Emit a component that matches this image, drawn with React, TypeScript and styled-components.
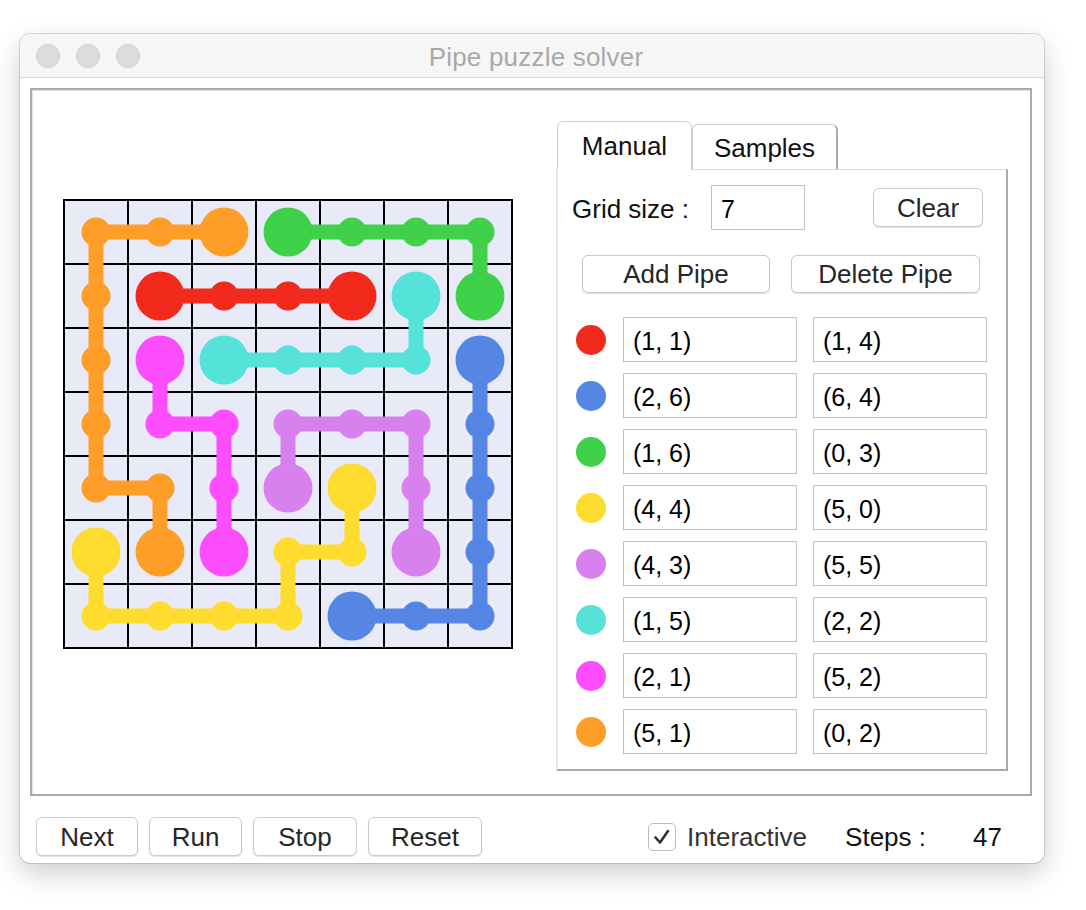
import React from "react";
import styled, { createGlobalStyle } from "styled-components";

const GlobalStyle = createGlobalStyle`
  html, body { margin: 0; padding: 0; background: #ffffff; }
  body { font-family: "Liberation Sans", Arial, sans-serif; }
  * { box-sizing: border-box; }
`;

const Page = styled.div`
  padding: 34px 0 0 20px;
  width: 1086px;
  height: 910px;
`;

const Window = styled.div`
  width: 1024px;
  height: 829px;
  border-radius: 10px;
  background: #ffffff;
  box-shadow: 0 10px 28px rgba(0, 0, 0, 0.2), 0 0 0 1px rgba(0, 0, 0, 0.13);
  display: flex;
  flex-direction: column;
  overflow: hidden;
`;

const TitleBar = styled.div`
  height: 44px;
  flex: none;
  background: #f6f6f6;
  border-bottom: 1px solid #d7d7d7;
  display: flex;
  align-items: center;
  padding-left: 16px;
`;

const Lights = styled.div`
  display: flex;
  gap: 16px;
`;

const Light = styled.span`
  width: 24px;
  height: 24px;
  border-radius: 50%;
  background: #dddddd;
  border: 1px solid #cfcfcf;
`;

const Title = styled.div`
  flex: 1;
  text-align: center;
  margin-left: -112px;
  padding-top: 3px;
  font-size: 26px;
  color: #a9a9a9;
  letter-spacing: 0.2px;
`;

const Body = styled.div`
  flex: 1;
  display: flex;
  flex-direction: column;
  padding: 10px 12px 0 10px;
`;

const Frame = styled.div`
  height: 708px;
  border: 2px solid #aaaaaa;
  box-shadow: inset 1px 1px 0 #e2e2e2;
  display: flex;
  align-items: flex-start;
  padding: 0 22px 0 31px;
  gap: 41px;
`;

const Board = styled.svg`
  flex: none;
  margin-top: 109px;
  display: block;
`;

const Tabbed = styled.div`
  margin-top: 31px;
  width: 452px;
  display: flex;
  flex-direction: column;
`;

const TabStrip = styled.div`
  display: flex;
  align-items: flex-end;
  padding-left: 1px;
  height: 48px;
`;

const Tab = styled.div<{ $active?: boolean; $w: number }>`
  width: ${(p) => p.$w}px;
  height: ${(p) => (p.$active ? 49 : 45)}px;
  margin-bottom: ${(p) => (p.$active ? -1 : 0)}px;
  position: relative;
  z-index: ${(p) => (p.$active ? 2 : 1)};
  background: #ffffff;
  border: 1px solid #cdcdcd;
  border-bottom: none;
  border-right: ${(p) => (p.$active ? "1px solid #cdcdcd" : "2px solid #a9a9a9")};
  border-radius: 6px 6px 0 0;
  display: flex;
  align-items: center;
  justify-content: center;
  padding-top: ${(p) => (p.$active ? 0 : 3)}px;
  font-size: 26px;
  color: #111111;
`;

const TabPanel = styled.div`
  height: 602px;
  border-top: 1px solid #dddddd;
  border-left: 2px solid #e6e6e6;
  border-right: 2px solid #a9a9a9;
  border-bottom: 2px solid #a9a9a9;
  padding: 15px 23px 0 14px;
  display: flex;
  flex-direction: column;
`;

const SizeRow = styled.div`
  display: flex;
  align-items: center;
  height: 45px;
`;

const Label = styled.span`
  font-size: 26px;
  color: #111111;
  width: 139px;
  flex: none;
  padding-top: 3px;
`;

const Field = styled.input<{ $w: number }>`
  width: ${(p) => p.$w}px;
  height: 45px;
  flex: none;
  border: 1px solid #c2c2c2;
  border-radius: 0;
  background: #ffffff;
  padding: 3px 0 0 9px;
  font-family: "Liberation Sans", Arial, sans-serif;
  font-size: 25px;
  color: #000000;
  outline: none;
`;

const Button = styled.button<{ $w: number; $h?: number }>`
  width: ${(p) => p.$w}px;
  height: ${(p) => p.$h ?? 39}px;
  flex: none;
  border: 1px solid #c9c9c9;
  border-radius: 6px;
  background: #ffffff;
  box-shadow: 0 1px 1px rgba(0, 0, 0, 0.12);
  font-family: "Liberation Sans", Arial, sans-serif;
  font-size: 26px;
  color: #262626;
  padding: 1px 0 0;
  display: flex;
  align-items: center;
  justify-content: center;
`;

const PushRight = styled.div`
  margin-left: auto;
`;

const PipeButtons = styled.div`
  display: flex;
  gap: 21px;
  margin: 25px 0 0 10px;
`;

const PipeList = styled.div`
  display: flex;
  flex-direction: column;
  gap: 11px;
  margin: 24px 0 0 4px;
`;

const PipeRow = styled.div`
  display: flex;
  align-items: center;
  height: 45px;
`;

const Dot = styled.span<{ $c: string }>`
  width: 30px;
  height: 30px;
  border-radius: 50%;
  background: ${(p) => p.$c};
  flex: none;
  margin-right: 17px;
`;

const FieldGap = styled.span`
  width: 16px;
  flex: none;
`;

const BottomBar = styled.div`
  display: flex;
  align-items: center;
  margin-top: 21px;
  padding-left: 6px;
  gap: 11px;
`;

const Status = styled.div`
  margin-left: auto;
  display: flex;
  align-items: center;
  padding-right: 30px;
  font-size: 26px;
`;

const Check = styled.span`
  width: 28px;
  height: 28px;
  border: 1px solid #bdbdbd;
  border-radius: 5px;
  background: #ffffff;
  display: flex;
  align-items: center;
  justify-content: center;
  margin-right: 11px;
`;

const CheckLabel = styled.span`
  color: #333333;
  width: 125px;
  padding-top: 2px;
`;

const StepsLabel = styled.span`
  color: #111111;
  margin-left: 33px;
  width: 128px;
  padding-top: 2px;
`;

const StepsValue = styled.span`
  color: #111111;
  padding-top: 2px;
`;

type Cell = [number, number];
const pipes: { color: string; path: Cell[] }[] = [
  { color: "#f22a1c", path: [[1, 1], [1, 2], [1, 3], [1, 4]] },
  { color: "#5686e4", path: [[2, 6], [3, 6], [4, 6], [5, 6], [6, 6], [6, 5], [6, 4]] },
  { color: "#3fd14a", path: [[1, 6], [0, 6], [0, 5], [0, 4], [0, 3]] },
  { color: "#fedb2f", path: [[4, 4], [5, 4], [5, 3], [6, 3], [6, 2], [6, 1], [6, 0], [5, 0]] },
  { color: "#d980ef", path: [[4, 3], [3, 3], [3, 4], [3, 5], [4, 5], [5, 5]] },
  { color: "#55e3d9", path: [[1, 5], [2, 5], [2, 4], [2, 3], [2, 2]] },
  { color: "#fd4dfc", path: [[2, 1], [3, 1], [3, 2], [4, 2], [5, 2]] },
  { color: "#fe9e29", path: [[5, 1], [4, 1], [4, 0], [3, 0], [2, 0], [1, 0], [0, 0], [0, 1], [0, 2]] },
];

const fmt = (c: Cell) => `(${c[0]}, ${c[1]})`;
const cx = (c: number) => 33 + 64 * c;

function PuzzleBoard() {
  const lines = [];
  for (let i = 0; i <= 7; i++) {
    const p = 1 + 64 * i;
    lines.push(<line key={`v${i}`} x1={p} y1={0} x2={p} y2={450} />);
    lines.push(<line key={`h${i}`} x1={0} y1={p} x2={450} y2={p} />);
  }
  return (
    <Board width={452} height={452} viewBox="0 0 452 452">
      <rect x={1} y={1} width={448} height={448} fill="#e9eaf8" />
      <g stroke="#000" strokeWidth={2}>{lines}</g>
      {pipes.map((p, i) => (
        <g key={i} fill={p.color}>
          <polyline
            points={p.path.map(([r, c]) => `${cx(c)},${cx(r)}`).join(" ")}
            fill="none"
            stroke={p.color}
            strokeWidth={15}
          />
          {p.path.map(([r, c], j) => {
            const end = j === 0 || j === p.path.length - 1;
            return <circle key={j} cx={cx(c)} cy={cx(r)} r={end ? 24.5 : 14.5} />;
          })}
        </g>
      ))}
    </Board>
  );
}

export default function App() {
  return (
    <>
      <GlobalStyle />
      <Page>
        <Window>
          <TitleBar>
            <Lights>
              <Light />
              <Light />
              <Light />
            </Lights>
            <Title>Pipe puzzle solver</Title>
          </TitleBar>
          <Body>
            <Frame>
              <PuzzleBoard />
              <Tabbed>
                <TabStrip>
                  <Tab $active $w={135}>Manual</Tab>
                  <Tab $w={146}>Samples</Tab>
                </TabStrip>
                <TabPanel>
                  <SizeRow>
                    <Label>Grid size :</Label>
                    <Field $w={94} defaultValue="7" readOnly />
                    <PushRight>
                      <Button $w={110}>Clear</Button>
                    </PushRight>
                  </SizeRow>
                  <PipeButtons>
                    <Button $w={188} $h={38}>Add Pipe</Button>
                    <Button $w={189} $h={38}>Delete Pipe</Button>
                  </PipeButtons>
                  <PipeList>
                    {pipes.map((p, i) => (
                      <PipeRow key={i}>
                        <Dot $c={p.color} />
                        <Field $w={174} defaultValue={fmt(p.path[0])} readOnly />
                        <FieldGap />
                        <Field $w={174} defaultValue={fmt(p.path[p.path.length - 1])} readOnly />
                      </PipeRow>
                    ))}
                  </PipeList>
                </TabPanel>
              </Tabbed>
            </Frame>
            <BottomBar>
              <Button $w={102}>Next</Button>
              <Button $w={93}>Run</Button>
              <Button $w={104}>Stop</Button>
              <Button $w={114}>Reset</Button>
              <Status>
                <Check>
                  <svg width="20" height="20" viewBox="0 0 20 20">
                    <path d="M3.5 10.5 L8 15.5 L16 4" fill="none" stroke="#333" strokeWidth={2.6} strokeLinecap="round" strokeLinejoin="round" />
                  </svg>
                </Check>
                <CheckLabel>Interactive</CheckLabel>
                <StepsLabel>Steps :</StepsLabel>
                <StepsValue>47</StepsValue>
              </Status>
            </BottomBar>
          </Body>
        </Window>
      </Page>
    </>
  );
}
